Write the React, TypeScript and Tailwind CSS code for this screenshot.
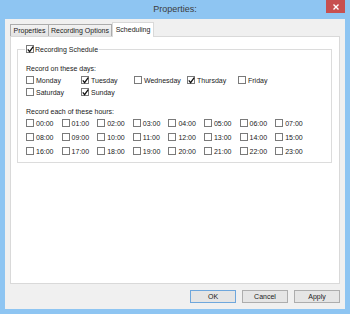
import React from "react";

const days = [
  { label: "Monday", on: false },
  { label: "Tuesday", on: true },
  { label: "Wednesday", on: false },
  { label: "Thursday", on: true },
  { label: "Friday", on: false },
  { label: "Saturday", on: false },
  { label: "Sunday", on: true },
];

const hours = Array.from({ length: 24 }, (_, i) => (i < 10 ? "0" + i : "" + i) + ":00");

function Box({ checked }: { checked?: boolean }) {
  return (
    <span className="w-[8px] h-[8px] border border-[#7a7a7a] bg-white flex items-center justify-center shrink-0">
      {checked && (
        <svg width="7" height="7" viewBox="0 0 7 7" className="overflow-visible">
          <path d="M0.8 3.4 L2.6 5.6 L6.2 0.6" stroke="#111" strokeWidth="1.3" fill="none" />
        </svg>
      )}
    </span>
  );
}

function CheckItem({ label, checked }: { label: string; checked?: boolean }) {
  return (
    <div className="flex items-center gap-[2px] h-[10px]">
      <Box checked={checked} />
      <span className="leading-none">{label}</span>
    </div>
  );
}

export default function App() {
  return (
    <div
      className="w-[350px] h-[314px] bg-[#8ec5f2] flex flex-col text-[#1a1a1a] text-[7px]"
      style={{ fontFamily: '"Liberation Sans", Arial, sans-serif' }}
    >
      {/* title bar */}
      <div className="h-[19px] grid grid-cols-[1fr_auto_1fr]">
        <div />
        <div className="self-center text-[9px] text-[#3c3c3c] leading-none">Properties:</div>
        <div className="justify-self-end self-start mr-[5px] w-[19px] h-[13px] bg-[#c75050] flex items-center justify-center">
          <svg width="6" height="6" viewBox="0 0 6 6">
            <path d="M0.5 0.5 L5.5 5.5 M5.5 0.5 L0.5 5.5" stroke="#fff" strokeWidth="1.4" />
          </svg>
        </div>
      </div>

      {/* client */}
      <div className="flex-1 mx-[5px] mb-[5px] bg-[#f0f0f0] flex flex-col px-[5px] pt-[3px] pb-[5px]">
        <div className="flex items-end h-[15px] -mb-px">
          <div className="w-[39px] h-[13px] border border-[#acacac] bg-gradient-to-b from-[#f2f2f2] to-[#e3e3e3] flex items-center justify-center leading-none">
            Properties
          </div>
          <div className="w-[63px] h-[13px] border border-l-0 border-[#acacac] bg-gradient-to-b from-[#f2f2f2] to-[#e3e3e3] flex items-center justify-center leading-none">
            Recording Options
          </div>
          <div className="relative z-10 w-[42px] h-[15px] border border-b-0 border-[#d9d9d9] bg-white flex items-center justify-center leading-none pb-[1px]">
            Scheduling
          </div>
        </div>

        <div className="h-[248px] border border-[#d9d9d9] bg-white pl-[6px] pr-[7px] pt-[7px]">
          <fieldset className="border border-[#dcdcdc] px-[8px] pb-[6px]">
            <legend className="-ml-[1px] px-[1px] h-[10px] flex items-center gap-[1px]">
              <Box checked />
              <span className="leading-none">Recording Schedule</span>
            </legend>

            <div className="mt-[9px] h-[10px] flex items-center leading-none">Record on these days:</div>
            <div className="mt-[2px] grid grid-cols-[55px_53px_53px_51px_auto] gap-y-[2px]">
              {days.map((d) => (
                <CheckItem key={d.label} label={d.label} checked={d.on} />
              ))}
            </div>

            <div className="mt-[9px] h-[10px] flex items-center leading-none">Record each of these hours:</div>
            <div className="mt-[2px] grid grid-cols-[repeat(8,35.6px)] gap-y-[4px]">
              {hours.map((h) => (
                <CheckItem key={h} label={h} />
              ))}
            </div>
          </fieldset>
        </div>

        <div className="mt-[6px] flex justify-end gap-[6px]">
          <button className="w-[46px] h-[13px] border border-[#6fa7dc] bg-[#e5e5e5] leading-none">OK</button>
          <button className="w-[46px] h-[13px] border border-[#adadad] bg-[#e5e5e5] leading-none">Cancel</button>
          <button className="w-[46px] h-[13px] border border-[#adadad] bg-[#e5e5e5] leading-none">Apply</button>
        </div>
      </div>
    </div>
  );
}
